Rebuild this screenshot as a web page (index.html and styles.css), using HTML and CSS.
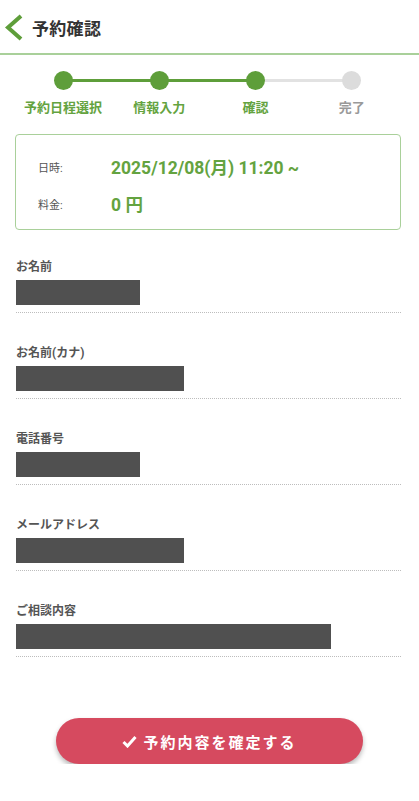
FILE: index.html
```html
<!DOCTYPE html>
<html lang="ja">
<head>
<meta charset="utf-8">
<title>予約確認</title>
<link rel="stylesheet" href="styles.css">
</head>
<body>
<header class="header">
  <svg class="back" width="20" height="28" viewBox="0 0 20 28" aria-hidden="true">
    <path d="M17 2 L4 13.5 L17 25" fill="none" stroke="#5e9e3a" stroke-width="4" stroke-linejoin="miter"/>
  </svg>
  <h1 class="title">予約確認</h1>
</header>

<ol class="steps">
  <li class="step done"><span class="dot"></span><span class="step-label">予約日程選択</span></li>
  <li class="step done"><span class="dot"></span><span class="step-label">情報入力</span></li>
  <li class="step done"><span class="dot"></span><span class="step-label">確認</span></li>
  <li class="step"><span class="dot"></span><span class="step-label">完了</span></li>
</ol>

<section class="summary">
  <div class="summary-row"><span class="summary-key">日時:</span><span class="summary-val">2025/12/08(月) 11:20 ~</span></div>
  <div class="summary-row"><span class="summary-key">料金:</span><span class="summary-val">0 円</span></div>
</section>

<section class="fields">
  <div class="field"><div class="field-label">お名前</div><div class="mask" style="width:124px"></div></div>
  <div class="field"><div class="field-label">お名前(カナ)</div><div class="mask" style="width:168px"></div></div>
  <div class="field"><div class="field-label">電話番号</div><div class="mask" style="width:124px"></div></div>
  <div class="field"><div class="field-label">メールアドレス</div><div class="mask" style="width:168px"></div></div>
  <div class="field"><div class="field-label">ご相談内容</div><div class="mask" style="width:315px"></div></div>
</section>

<div class="actions">
  <button class="confirm" type="button">
    <svg class="check" width="15" height="13" viewBox="0 0 15 13" aria-hidden="true">
      <path d="M1.5 7 L5.5 11 L13.5 2" fill="none" stroke="#fff" stroke-width="3"/>
    </svg>
    <span>予約内容を確定する</span>
  </button>
</div>
</body>
</html>
```

FILE: styles.css
```css
* { box-sizing: border-box; }

body {
  margin: 0;
  background: #fff;
  font-family: Roboto, "Noto Sans CJK JP", sans-serif;
  color: #333;
}

.header {
  height: 55px;
  display: flex;
  align-items: center;
  padding: 2px 0 0 4px;
  border-bottom: 2px solid #a9d09a;
}

.back { display: block; margin-right: 8px; }

.title {
  margin: 0;
  font-size: 17px;
  font-weight: 700;
  color: #333;
  letter-spacing: 0.3px;
}

.steps {
  list-style: none;
  margin: 0;
  padding: 16px 19px 0 15px;
  display: grid;
  grid-template-columns: repeat(4, 1fr);
}

.step {
  position: relative;
  display: flex;
  flex-direction: column;
  align-items: center;
}

.step + .step::before {
  content: "";
  position: absolute;
  top: 8px;
  left: -50%;
  width: 100%;
  height: 3px;
  background: #e2e2e2;
}

.step.done + .step.done::before { background: #5e9e3a; }

.dot {
  position: relative;
  z-index: 1;
  width: 19px;
  height: 19px;
  border-radius: 50%;
  background: #dcdcdc;
}

.step.done .dot { background: #5e9e3a; }

.step-label {
  margin-top: 9px;
  font-size: 13px;
  line-height: 17px;
  font-weight: 700;
  color: #999;
  white-space: nowrap;
}

.step.done .step-label { color: #64a340; }

.summary {
  margin: 18px 18px 0 15px;
  border: 1px solid #a9d09a;
  border-radius: 4px;
  padding: 13px 0 7px 22px;
}

.summary-row {
  display: flex;
  align-items: center;
  height: 37px;
}

.summary-key {
  width: 73px;
  font-size: 11px;
  color: #555;
}

.summary-val {
  font-size: 17.5px;
  font-weight: 700;
  color: #64a340;
}

.fields {
  margin: 28px 18px 0 16px;
}

.field {
  padding-bottom: 7px;
  border-bottom: 1px dotted #bdbdbd;
}

.field + .field { margin-top: 31px; }

.field-label {
  font-size: 12px;
  line-height: 18px;
  font-weight: 700;
  color: #555;
  margin-bottom: 4px;
}

.mask {
  height: 25px;
  background: #505050;
}

.actions {
  display: flex;
  justify-content: center;
  margin-top: 61px;
}

.confirm {
  width: 307px;
  height: 46px;
  border: none;
  border-radius: 23px;
  background: #d64a5f;
  box-shadow: 0 3px 5px rgba(0, 0, 0, 0.28);
  color: #fff;
  font-family: "Noto Sans CJK JP", sans-serif;
  font-size: 15px;
  font-weight: 700;
  letter-spacing: 2px;
  display: flex;
  align-items: center;
  justify-content: center;
  gap: 6px;
  padding: 0;
}

.check { display: block; }
```
